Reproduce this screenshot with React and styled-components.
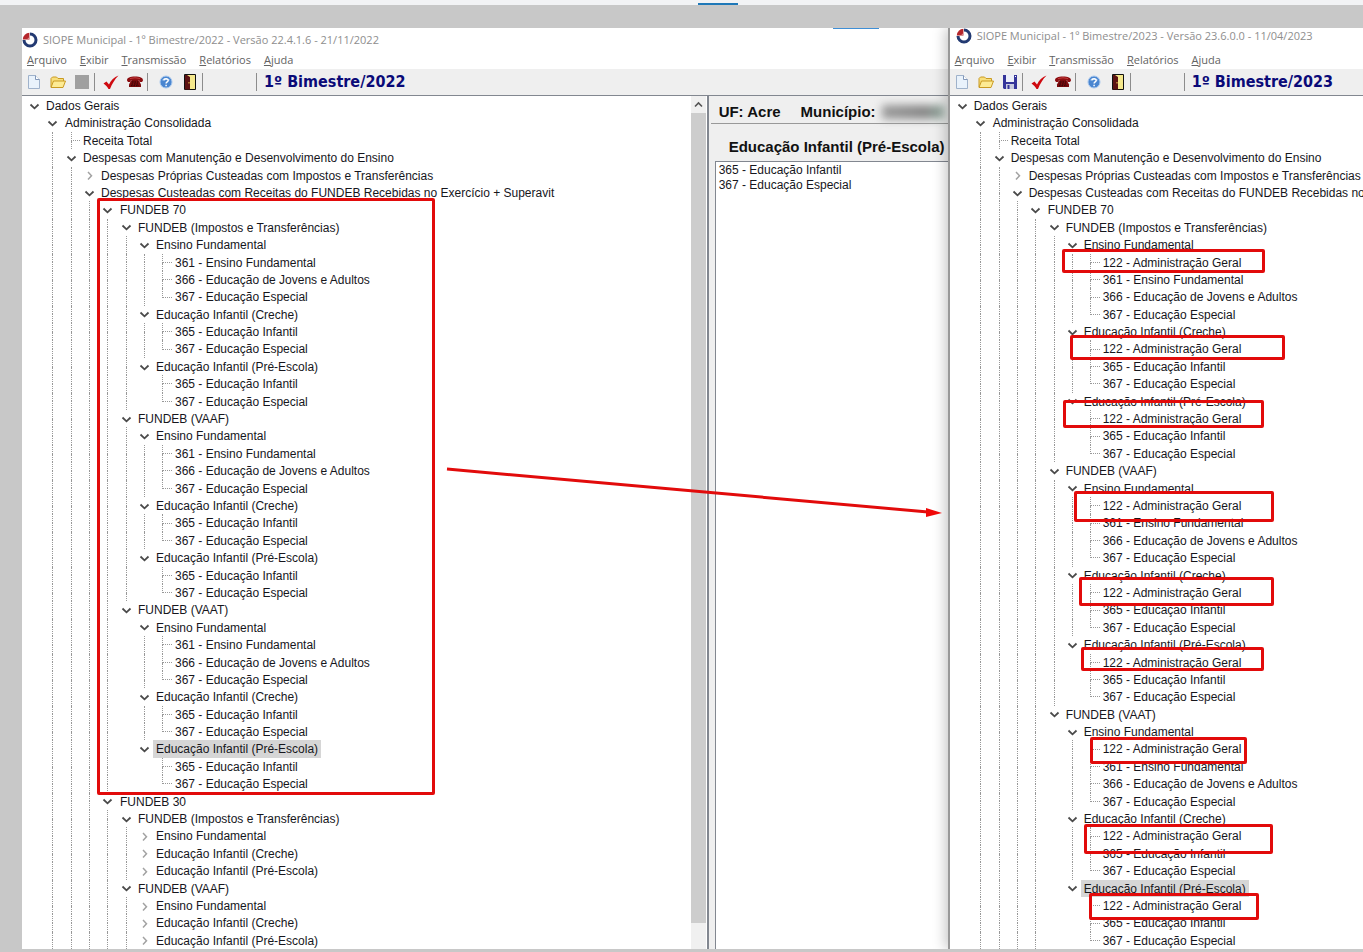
import React from "react";
import styled, { createGlobalStyle, css } from "styled-components";

const GlobalStyle = createGlobalStyle`
  * {
    box-sizing: border-box;
  }

  body {
    margin: 0;
    background: #c8c8c8;
    font-family: "Liberation Sans", Arial, sans-serif;
    font-size: 12px;
    color: #16161c;
  }

  button {
    font: inherit;
    color: inherit;
    border: none;
    background: none;
    padding: 0;
    cursor: pointer;
  }
`;

const Desktop = styled.main`
  position: relative;
  display: flex;
  flex-direction: column;
  height: 100vh;
  overflow: hidden;
`;

const TopStrip = styled.div`
  display: flex;
  justify-content: center;
  align-items: flex-end;
  height: 5px;
  padding-left: 73px;
  background: #f2f3f5;
`;

const ActiveTab = styled.div`
  width: 40px;
  height: 2px;
  background: #1f78b8;
`;

const Windows = styled.div`
  flex: 1;
  display: flex;
  min-height: 0;
  padding: 23px 0 3px 22px;
`;

const Window = styled.section`
  position: relative;
  flex: ${(props) => props.$share} 1 0;
  display: flex;
  flex-direction: column;
  min-width: 0;
  background: #fff;

  ${(props) =>
    props.$front &&
    css`
      z-index: 1;
      border-left: 2px solid #999;
      box-shadow: -3px 0 12px rgba(0, 0, 0, 0.22);
      clip-path: inset(0 0 0 -16px);
    `}
`;

const TitleBar = styled.header`
  display: flex;
  align-items: center;
  gap: 5px;
  height: 23px;
  margin-top: ${(props) => (props.$raised ? "-4px" : "0")};
  margin-bottom: ${(props) => (props.$raised ? "4px" : "0")};
  padding-left: ${(props) => (props.$raised ? "6px" : "0")};
  color: #8e8e8e;
  font-family: "Open Sans", "Noto Sans", sans-serif;
  font-size: 11px;
  white-space: nowrap;
`;

const TopAccent = styled.div`
  position: absolute;
  top: 0;
  right: 69px;
  width: 46px;
  height: 1px;
  background: #3f8fd6;
`;

const MenuBar = styled.nav`
  display: flex;
  align-items: center;
  gap: 13px;
  height: 18px;
  padding: 0 0 2px 5px;
  color: #636363;
  font-family: "Open Sans", "Noto Sans", sans-serif;
  font-size: 11px;

  button::first-letter {
    text-decoration: underline;
  }
`;

const Toolbar = styled.div`
  display: flex;
  align-items: center;
  height: 27px;
  background: #efefef;
  border-bottom: 1px solid #828790;
`;

const ToolButton = styled.button`
  display: flex;
  justify-content: center;
  align-items: center;
  width: 24px;
  height: 24px;
`;

const Separator = styled.div`
  width: 1px;
  height: 18px;
  margin-right: ${(props) => props.$after}px;
  background: #8c8c8c;
`;

const Period = styled.h1`
  margin: 0;
  padding-bottom: 2px;
  color: #0a0a78;
  font-family: "DejaVu Sans Condensed", "DejaVu Sans", sans-serif;
  font-size: 16px;
  font-weight: bold;
  white-space: nowrap;
`;

const Body = styled.div`
  flex: 1;
  display: flex;
  min-height: 0;
`;

const TreePane = styled.div`
  flex: 1;
  display: flex;
  min-width: 0;
  overflow: hidden;
  border-right: ${(props) => (props.$divided ? "2px solid #828790" : "none")};
`;

const Tree = styled.ul`
  flex: 1;
  display: flex;
  flex-direction: column;
  min-width: 0;
  margin: 0;
  padding: 1px 0 0 3px;
  list-style: none;
`;

const Row = styled.li`
  flex: 1;
  display: flex;
  min-height: 0;
  line-height: 18px;
  white-space: nowrap;
`;

const Guide = styled.span`
  flex: none;
  display: flex;
  flex-direction: column;
  width: 18px;
  padding-left: 9px;

  &:nth-child(3n + 2) {
    width: 19px;
  }

  &::before,
  &::after {
    content: "";
    flex: 1;
    border: 0 dotted #989898;
  }

  ${(props) =>
    props.$line &&
    css`
      &::before,
      &::after {
        border-left-width: 1px;
      }
    `}

  ${(props) =>
    props.$elbow &&
    css`
      &::before {
        border-bottom-width: 1px;
      }
    `}

  ${(props) =>
    props.$last &&
    css`
      &::after {
        border-left-width: 0;
      }
    `}
`;

const Toggle = styled.button`
  flex: none;
  display: flex;
  align-items: center;
  width: 18px;
  padding: 1px 0 0 4px;

  &:nth-child(3n + 2) {
    width: 19px;
  }
`;

const Label = styled.span`
  padding: 0 3px;
  background: ${(props) => (props.$selected ? "#d6d6d6" : "transparent")};
`;

const ScrollBar = styled.div`
  display: flex;
  flex-direction: column;
  width: 15px;
  margin-right: 1px;
  background: #f0f0f0;
`;

const ScrollUp = styled.button`
  display: flex;
  justify-content: center;
  align-items: center;
  height: 17px;
`;

const Thumb = styled.div`
  flex: 1;
  margin-bottom: 26px;
  background: #cdcdcd;
`;

const Details = styled.aside`
  flex: none;
  display: flex;
  flex-direction: column;
  width: 239px;
  padding-left: 2px;
  overflow: hidden;
  background: #efefef;
  white-space: nowrap;
`;

const Place = styled.div`
  display: flex;
  align-items: center;
  gap: 20px;
  height: 28px;
  padding: 4px 0 0 8px;
  border-bottom: 1px solid #999;
  font-size: 15px;
  font-weight: bold;
  color: #111;
`;

const City = styled.span`
  display: flex;
  align-items: center;
  gap: 6px;
`;

const Redacted = styled.span`
  width: 62px;
  height: 14px;
  background: linear-gradient(90deg, #9a9a9a, #858585 70%, #8fa89c);
  filter: blur(4px);
`;

const DetailsTitle = styled.h2`
  margin: 0;
  padding: 14px 0 5px 18px;
  font-size: 15px;
  line-height: 18px;
  color: #111;
`;

const Codes = styled.ul`
  flex: 1;
  margin: 0 0 0 4px;
  padding: 1px 0 0 3px;
  border: solid #828790;
  border-width: 1px 0 0 1px;
  background: #fff;
  list-style: none;
  line-height: 15px;
`;

const Annotations = styled.svg`
  position: absolute;
  top: 0;
  left: 0;
  z-index: 2;
  width: 100%;
  height: 100%;
  pointer-events: none;
`;

const Marker = styled.div`
  position: absolute;
  z-index: 2;
  left: ${(props) => props.$x}px;
  top: ${(props) => props.$y}px;
  width: ${(props) => props.$w}px;
  height: ${(props) => props.$h}px;
  border: 3px solid #e20b0b;
  border-radius: 2px;
  pointer-events: none;
`;

const Logo = () => (
  <svg width="16" height="16" viewBox="0 0 16 16">
    <circle cx="8" cy="8" r="6" fill="#fff" stroke="#233a72" strokeWidth="3" />
    <path d="M0 0h8v8H0z" fill="#fff" />
    <path d="M7.4 7.4V.8A7 7 0 0 0 .8 7.4z" fill="#b5262b" />
    <path d="M7.4 7.4V5.4A2 2 0 0 0 5.4 7.4z" fill="#d98a8c" />
  </svg>
);

const NewIcon = () => (
  <svg width="14" height="16" viewBox="0 0 14 16">
    <path d="M1.5 1.5h7l4 4v9h-11z" fill="#e9f2fb" stroke="#9fb2cb" />
    <path d="M8.5 1.5v4h4" fill="#fff" stroke="#8297b8" />
  </svg>
);

const OpenIcon = () => (
  <svg width="16" height="14" viewBox="0 0 16 14">
    <path d="M1 12V3.5L2.5 2h4L8 3.5h5.5V6" fill="#f8df7c" stroke="#c99a22" />
    <path d="M1 12.5 3.5 6h12L13 12.5z" fill="#fdeb94" stroke="#c99a22" />
  </svg>
);

const SaveIcon = ({ disabled }) =>
  disabled ? (
    <svg width="14" height="14" viewBox="0 0 14 14">
      <path d="M0 0h14v14H0z" fill="#a0a0a0" />
    </svg>
  ) : (
    <svg width="14" height="14" viewBox="0 0 14 14">
      <path d="M0 0h14v14H1l-1-1z" fill="#34349a" />
      <path d="M3 0h8v7H3z" fill="#eceffa" />
      <path d="M3 9h8v5H3z" fill="#c9cbe0" />
      <path d="M4.5 10h2v4h-2z" fill="#34349a" />
      <path d="M12 1h1v1h-1z" fill="#fff" />
    </svg>
  );

const CheckIcon = () => (
  <svg width="16" height="15" viewBox="0 0 16 15">
    <path d="M.5 8.500 3.500 6.500 6 9.500C8 5.500 11 2 15.500.500 11.500 4.500 9 9 7 14H5.500C4.500 12 2.500 10 .5 8.500z" fill="#cf0a10" />
  </svg>
);

const PhoneIcon = () => (
  <svg width="16" height="12" viewBox="0 0 16 12">
    <path d="M0 4.500C0 1.500 3 .500 8 .500s8 1 8 4l-1 1.500h-2.500L12 4H4l-.5 2H1z" fill="#8c0d10" />
    <path d="M4.500 4h7L14 8.500V11H2V8.500z" fill="#7a0a0d" />
    <path d="M5 6h6M4.500 8h7M4 9.700h8" stroke="#2a0506" strokeDasharray="1.500 1" />
    <path d="M3 2.500Q8 1 13 2.500" fill="none" stroke="#d34a4a" strokeWidth=".8" />
  </svg>
);

const HelpIcon = () => (
  <svg width="14" height="14" viewBox="0 0 14 14">
    <circle cx="7" cy="7" r="6" fill="#4a86d0" stroke="#a9c8ee" />
    <path d="M2.500 5.500a5 4 0 0 1 9 0q-4-1-9 0z" fill="#8fb9ea" />
    <path d="M4.800 5.400C5 3.300 9.300 3.300 9.200 5.500 9.100 6.800 7.100 6.800 7.100 8.400M7.100 9.700v1.500" fill="none" stroke="#fff" strokeWidth="1.500" />
  </svg>
);

const ExitIcon = () => (
  <svg width="12" height="16" viewBox="0 0 12 16">
    <path d="M.5.500h11v15H.5z" fill="#f5e88c" stroke="#111" />
    <path d="M1 1h2l3 2v12.500H1z" fill="#5c1212" />
    <path d="M4.500 8h1v1.500h-1z" fill="#f5d04a" />
  </svg>
);

const Chevron = ({ open }) => (
  <svg width="11" height="9" viewBox="0 0 11 9">
    {open ? (
      <path d="M1.500 2.500 5.500 6.300l4-3.800" fill="none" stroke="#4a4a4a" strokeWidth="1.800" />
    ) : (
      <path d="M4 1l3.500 3.700L4 8.500" fill="none" stroke="#a2a2a2" strokeWidth="1.500" />
    )}
  </svg>
);

const leaf = (level, text) => ({ level, text, leaf: true });
const open = (level, text) => ({ level, text, open: true });
const closed = (level, text) => ({ level, text });

const heading = [
  open(0, "Dados Gerais"),
  open(1, "Administração Consolidada"),
  leaf(2, "Receita Total"),
  open(2, "Despesas com Manutenção e Desenvolvimento do Ensino"),
  closed(3, "Despesas Próprias Custeadas com Impostos e Transferências"),
  open(3, "Despesas Custeadas com Receitas do FUNDEB Recebidas no Exercício + Superavit"),
  open(4, "FUNDEB 70"),
];

const sources = [
  "FUNDEB (Impostos e Transferências)",
  "FUNDEB (VAAF)",
  "FUNDEB (VAAT)",
];

const stages = [
  {
    name: "Ensino Fundamental",
    codes: [
      "361 - Ensino Fundamental",
      "366 - Educação de Jovens e Adultos",
      "367 - Educação Especial",
    ],
  },
  {
    name: "Educação Infantil (Creche)",
    codes: ["365 - Educação Infantil", "367 - Educação Especial"],
  },
  {
    name: "Educação Infantil (Pré-Escola)",
    codes: ["365 - Educação Infantil", "367 - Educação Especial"],
  },
];

const fundeb70 = (extra) =>
  sources.flatMap((source) => [
    open(5, source),
    ...stages.flatMap((stage) => [
      {
        ...open(6, stage.name),
        selected: source === sources[2] && stage === stages[2],
      },
      ...[...extra, ...stage.codes].map((code) => leaf(7, code)),
    ]),
  ]);

const fundeb30 = [
  open(4, "FUNDEB 30"),
  ...sources
    .slice(0, 2)
    .flatMap((source) => [
      open(5, source),
      ...stages.map((stage) => closed(6, stage.name)),
    ]),
];

const rows2022 = [...heading, ...fundeb70([]), ...fundeb30];
const rows2023 = [...heading, ...fundeb70(["122 - Administração Geral"])];

const markers = [
  [97, 198, 338, 597],
  [1062, 249, 203, 24],
  [1070, 335, 215, 25],
  [1063, 400, 201, 28],
  [1074, 491, 200, 31],
  [1079, 577, 195, 29],
  [1081, 647, 183, 24],
  [1090, 737, 157, 27],
  [1084, 824, 189, 30],
  [1089, 893, 170, 27],
];

// does the branch at this level go on below the given row?
const continues = (rows, index, level, openLevel) => {
  const next = rows.slice(index + 1).find((row) => row.level <= level);
  return next ? next.level === level : level <= openLevel;
};

const TreeView = ({ rows, openLevel }) => (
  <Tree>
    {rows.map((row, index) => (
      <Row key={index}>
        {Array.from({ length: row.level }, (_, level) => (
          <Guide
            key={level}
            $line={level > 0 && continues(rows, index, level, openLevel)}
          />
        ))}
        {row.leaf ? (
          <Guide
            $line
            $elbow
            $last={!continues(rows, index, row.level, openLevel)}
          />
        ) : (
          <Toggle aria-label={row.text} aria-expanded={!!row.open}>
            <Chevron open={row.open} />
          </Toggle>
        )}
        <Label $selected={row.selected}>{row.text}</Label>
      </Row>
    ))}
  </Tree>
);

const WindowHead = ({ title, period, raised, saveDisabled }) => (
  <>
    <TitleBar $raised={raised}>
      <Logo />
      <span>{title}</span>
    </TitleBar>
    <MenuBar>
      <button>Arquivo</button>
      <button>Exibir</button>
      <button>Transmissão</button>
      <button>Relatórios</button>
      <button>Ajuda</button>
    </MenuBar>
    <Toolbar>
      <ToolButton aria-label="Novo">
        <NewIcon />
      </ToolButton>
      <ToolButton aria-label="Abrir">
        <OpenIcon />
      </ToolButton>
      <ToolButton aria-label="Salvar" disabled={saveDisabled}>
        <SaveIcon disabled={saveDisabled} />
      </ToolButton>
      <Separator $after={4} />
      <ToolButton aria-label="Verificar">
        <CheckIcon />
      </ToolButton>
      <ToolButton aria-label="Transmitir">
        <PhoneIcon />
      </ToolButton>
      <Separator $after={6} />
      <ToolButton aria-label="Ajuda">
        <HelpIcon />
      </ToolButton>
      <ToolButton aria-label="Sair">
        <ExitIcon />
      </ToolButton>
      <Separator $after={53} />
      <Separator $after={7} />
      <Period>{period}</Period>
    </Toolbar>
  </>
);

const App = () => {
  return (
    <Desktop>
      <GlobalStyle />
      <TopStrip>
        <ActiveTab />
      </TopStrip>

      <Windows>
        <Window $share={927}>
          <TopAccent />
          <WindowHead
            title="SIOPE Municipal - 1º Bimestre/2022 - Versão 22.4.1.6 - 21/11/2022"
            period="1º Bimestre/2022"
            saveDisabled
          />
          <Body>
            <TreePane $divided>
              <TreeView rows={rows2022} openLevel={5} />
              <ScrollBar>
                <ScrollUp aria-label="Rolar para cima">
                  <svg width="9" height="7" viewBox="0 0 9 7">
                    <path d="M1 5.500 4.500 2 8 5.500" fill="none" stroke="#555" strokeWidth="1.600" />
                  </svg>
                </ScrollUp>
                <Thumb />
              </ScrollBar>
            </TreePane>
            <Details>
              <Place>
                <span>UF: Acre</span>
                <City>
                  Município: <Redacted />
                </City>
              </Place>
              <DetailsTitle>Educação Infantil (Pré-Escola)</DetailsTitle>
              <Codes>
                <li>365 - Educação Infantil</li>
                <li>367 - Educação Especial</li>
              </Codes>
            </Details>
          </Body>
        </Window>

        <Window $share={414} $front>
          <WindowHead
            title="SIOPE Municipal - 1º Bimestre/2023 - Versão 23.6.0.0 - 11/04/2023"
            period="1º Bimestre/2023"
            raised
          />
          <Body>
            <TreePane>
              <TreeView rows={rows2023} openLevel={4} />
            </TreePane>
          </Body>
        </Window>
      </Windows>

      {markers.map(([x, y, w, h]) => (
        <Marker key={y} $x={x} $y={y} $w={w} $h={h} />
      ))}
      <Annotations>
        <path d="M447 469 928 512" stroke="#e20b0b" strokeWidth="3" />
        <path d="M926 508l16 5-16 4z" fill="#f00808" />
      </Annotations>
    </Desktop>
  );
};

export default App;
